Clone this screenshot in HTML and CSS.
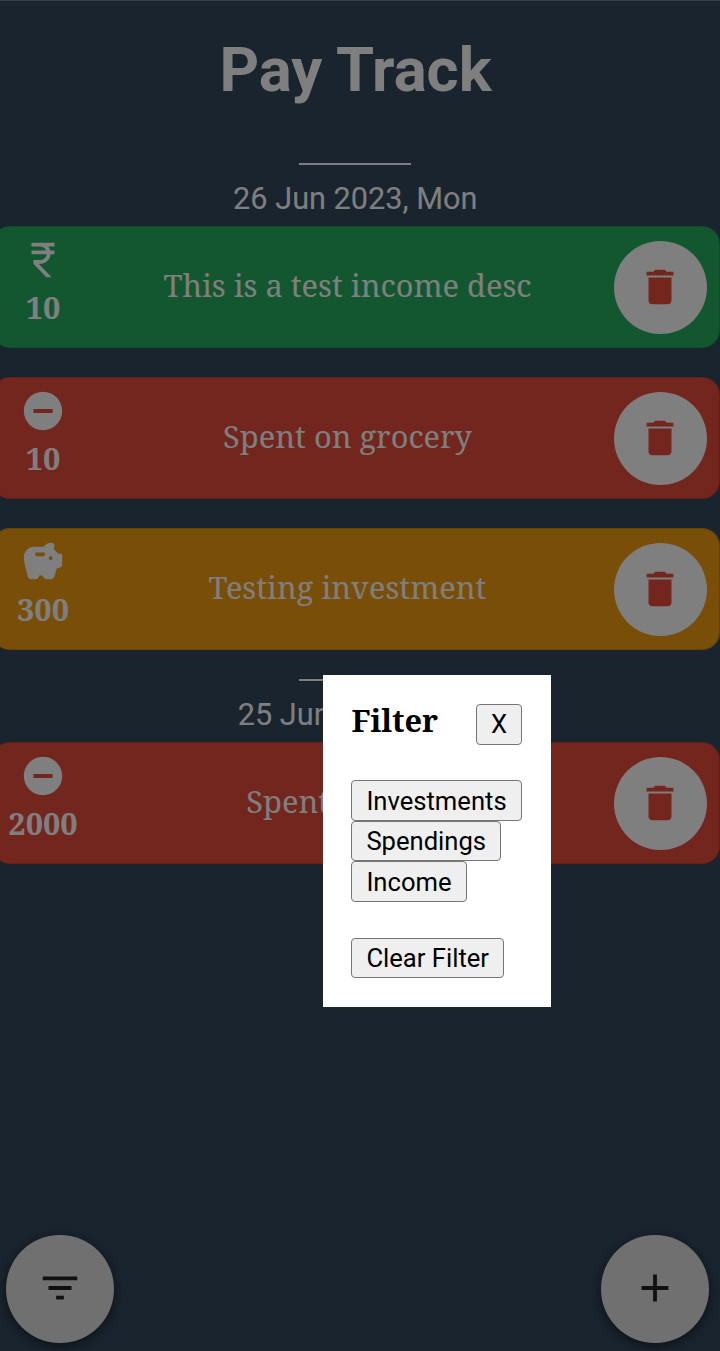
FILE: index.html
```html
<!DOCTYPE html>
<html lang="en">
<head>
<meta charset="utf-8">
<title>Pay Track</title>
<link rel="stylesheet" href="styles.css">
</head>
<body>
<svg class="sprite" aria-hidden="true">
  <symbol id="rupee" viewBox="0 0 24 24"><path d="M13.66 7c-.56-1.18-1.76-2-3.16-2H6V3h12v2h-3.26c.48.58.84 1.26 1.05 2H18v2h-2.02c-.25 2.8-2.61 5-5.48 5h-.73l6.73 7h-2.77L7 14v-2h3.5c1.76 0 3.22-1.3 3.46-3H6V7h7.66z"/></symbol>
  <symbol id="minus" viewBox="0 0 24 24"><path d="M12 2C6.48 2 2 6.48 2 12s4.48 10 10 10 10-4.48 10-10S17.52 2 12 2zm5 11H7v-2h10v2z"/></symbol>
  <symbol id="piggy" viewBox="0 0 24 24"><path d="M19.83 7.5l-2.27-2.27c.07-.42.18-.81.32-1.15.11-.26.15-.56.09-.87-.13-.72-.83-1.22-1.57-1.21-1.59.03-3 .81-3.9 2h-5C4.46 4 2 6.46 2 9.500c0 2.250 1.370 7.480 2.080 10.040.24.860 1.030 1.460 1.930 1.460H8c1.100 0 2-.9 2-2h2c0 1.100.9 2 2 2h2.010c.880 0 1.660-.580 1.920-1.430l1.250-4.160 2.140-.720c.410-.130.680-.510.680-.940V8.500c0-.550-.450-1-1-1h-1.170zM12.400 9H8.600c-.4 0-.6-.2-.6-.6v-.8c0-.4.2-.6.6-.6h3.800c.4 0 .6.2.6.6v.8c0 .4-.2.6-.6.6zM16 11c-.550 0-1-.450-1-1s.450-1 1-1 1 .450 1 1-.450 1-1 1z"/></symbol>
  <symbol id="trash" viewBox="0 0 24 24"><path d="M6 19c0 1.100.9 2 2 2h8c1.100 0 2-.9 2-2V7H6v12zM19 4h-3.500l-1-1h-5l-1 1H5v2h14V4z"/></symbol>
  <symbol id="filter" viewBox="0 0 24 24"><path d="M10 18h4v-2h-4v2zM3 6v2h18V6H3zm3 7h12v-2H6v2z"/></symbol>
  <symbol id="plus" viewBox="0 0 24 24"><path d="M19 13h-6v6h-2v-6H5v-2h6V5h2v6h6v2z"/></symbol>
</svg>
<main class="app">
  <h1 class="title">Pay Track</h1>
  <section class="day">
    <h2 class="date">26 Jun 2023, Mon</h2>
    <article class="entry income">
      <div class="amount"><svg class="icon"><use href="#rupee"/></svg><b>10</b></div>
      <p class="desc">This is a test income desc</p>
      <button class="delete" aria-label="Delete"><svg class="icon"><use href="#trash"/></svg></button>
    </article>
    <article class="entry spending">
      <div class="amount"><svg class="icon"><use href="#minus"/></svg><b>10</b></div>
      <p class="desc">Spent on grocery</p>
      <button class="delete" aria-label="Delete"><svg class="icon"><use href="#trash"/></svg></button>
    </article>
    <article class="entry investment">
      <div class="amount"><svg class="icon"><use href="#piggy"/></svg><b>300</b></div>
      <p class="desc">Testing investment</p>
      <button class="delete" aria-label="Delete"><svg class="icon"><use href="#trash"/></svg></button>
    </article>
  </section>
  <section class="day">
    <h2 class="date">25 Jun 2023, Sun</h2>
    <article class="entry spending">
      <div class="amount"><svg class="icon"><use href="#minus"/></svg><b>2000</b></div>
      <p class="desc">Spent on food</p>
      <button class="delete" aria-label="Delete"><svg class="icon"><use href="#trash"/></svg></button>
    </article>
  </section>
  <footer class="actions">
    <button class="fab" aria-label="Filter"><svg class="icon"><use href="#filter"/></svg></button>
    <button class="fab" aria-label="Add"><svg class="icon"><use href="#plus"/></svg></button>
  </footer>
</main>
<div class="overlay"></div>
<div class="modal">
  <header class="modal-head">
    <h3 class="modal-title">Filter</h3>
    <button class="btn">X</button>
  </header>
  <div class="options">
    <button class="btn">Investments</button>
    <button class="btn">Spendings</button>
    <button class="btn">Income</button>
  </div>
  <button class="btn">Clear Filter</button>
</div>
</body>
</html>
```
FILE: styles.css
```css
* { box-sizing: border-box; }
body { margin: 0; background: #34495e; overflow: hidden; }
.sprite { display: none; }
.app {
  display: flex;
  flex-direction: column;
  height: 1351px;
  border-top: 1px solid #777f88;
  color: #fff;
  font-family: "Noto Serif", "DejaVu Serif Condensed", "DejaVu Serif", serif;
}
.icon { display: block; width: 46px; height: 46px; fill: currentColor; }
.title {
  margin: 32px 9px 56px 0;
  font: bold 61.6px/74px Roboto, sans-serif;
  text-align: center;
}
.day { display: flex; flex-direction: column; gap: 29px; margin-bottom: 29px; }
.date {
  margin: 0 9.4px -29px 0;
  height: 63px;
  font: 400 30.7px/36px Roboto, sans-serif;
  text-align: center;
}
.date::before {
  content: "";
  display: block;
  width: 112px;
  height: 2px;
  margin: 0 auto 16px;
  background: #fff;
}
.entry {
  display: grid;
  grid-template-columns: 86px 1fr 93px;
  align-items: center;
  height: 122px;
  margin-left: -8px;
  padding: 0 12px 0 7px;
  border: 1px solid rgba(0, 0, 0, .15);
  border-radius: 18px;
}
.income { background: #27ae60; }
.spending { background: #e74c3c; }
.investment { background: #f39c12; }
.amount {
  display: flex;
  flex-direction: column;
  align-items: center;
  gap: 3px;
  padding-bottom: 10px;
  font-size: 30.7px;
  line-height: 42px;
}
.desc { margin: 0; padding: 0 5px 5px 0; text-align: center; font-size: 30.8px; line-height: 42px; }
.delete, .fab {
  display: grid;
  place-items: center;
  padding: 0;
  border: 0;
  border-radius: 50%;
}
.delete { width: 93px; height: 93px; background: #fff; color: #e74c3c; }
.delete .icon { margin-right: 1px; }
.actions {
  display: flex;
  justify-content: space-between;
  margin-top: auto;
  padding: 0 11.5px 8px 6px;
}
.fab {
  width: 108px;
  height: 108px;
  background: #e0e0e0;
  color: #222;
  box-shadow: 0 3px 12px rgba(0, 0, 0, .55);
}
.fab .icon { margin-bottom: 2px; }
.overlay { position: fixed; inset: 0; background: rgba(0, 0, 0, .5); }
.modal {
  position: absolute;
  left: 323px;
  top: 675px;
  width: 228px;
  height: 332px;
  padding: 29px 29px 29px 28.4px;
  background: #fff;
  color: #000;
}
.modal-head { display: flex; justify-content: space-between; height: 76.4px; }
.modal-title {
  margin: -2px 0 0;
  font: bold 30.7px/36px "Noto Serif", "DejaVu Serif Condensed", "DejaVu Serif", serif;
}
.options { display: flex; flex-direction: column; align-items: flex-start; margin-bottom: 36px; }
.btn {
  height: 40.5px;
  padding: 0 14px;
  border: 1.5px solid #767676;
  border-radius: 4px;
  background: #efefef;
  color: #000;
  font: 25.6px/36px Roboto, sans-serif;
}
```
